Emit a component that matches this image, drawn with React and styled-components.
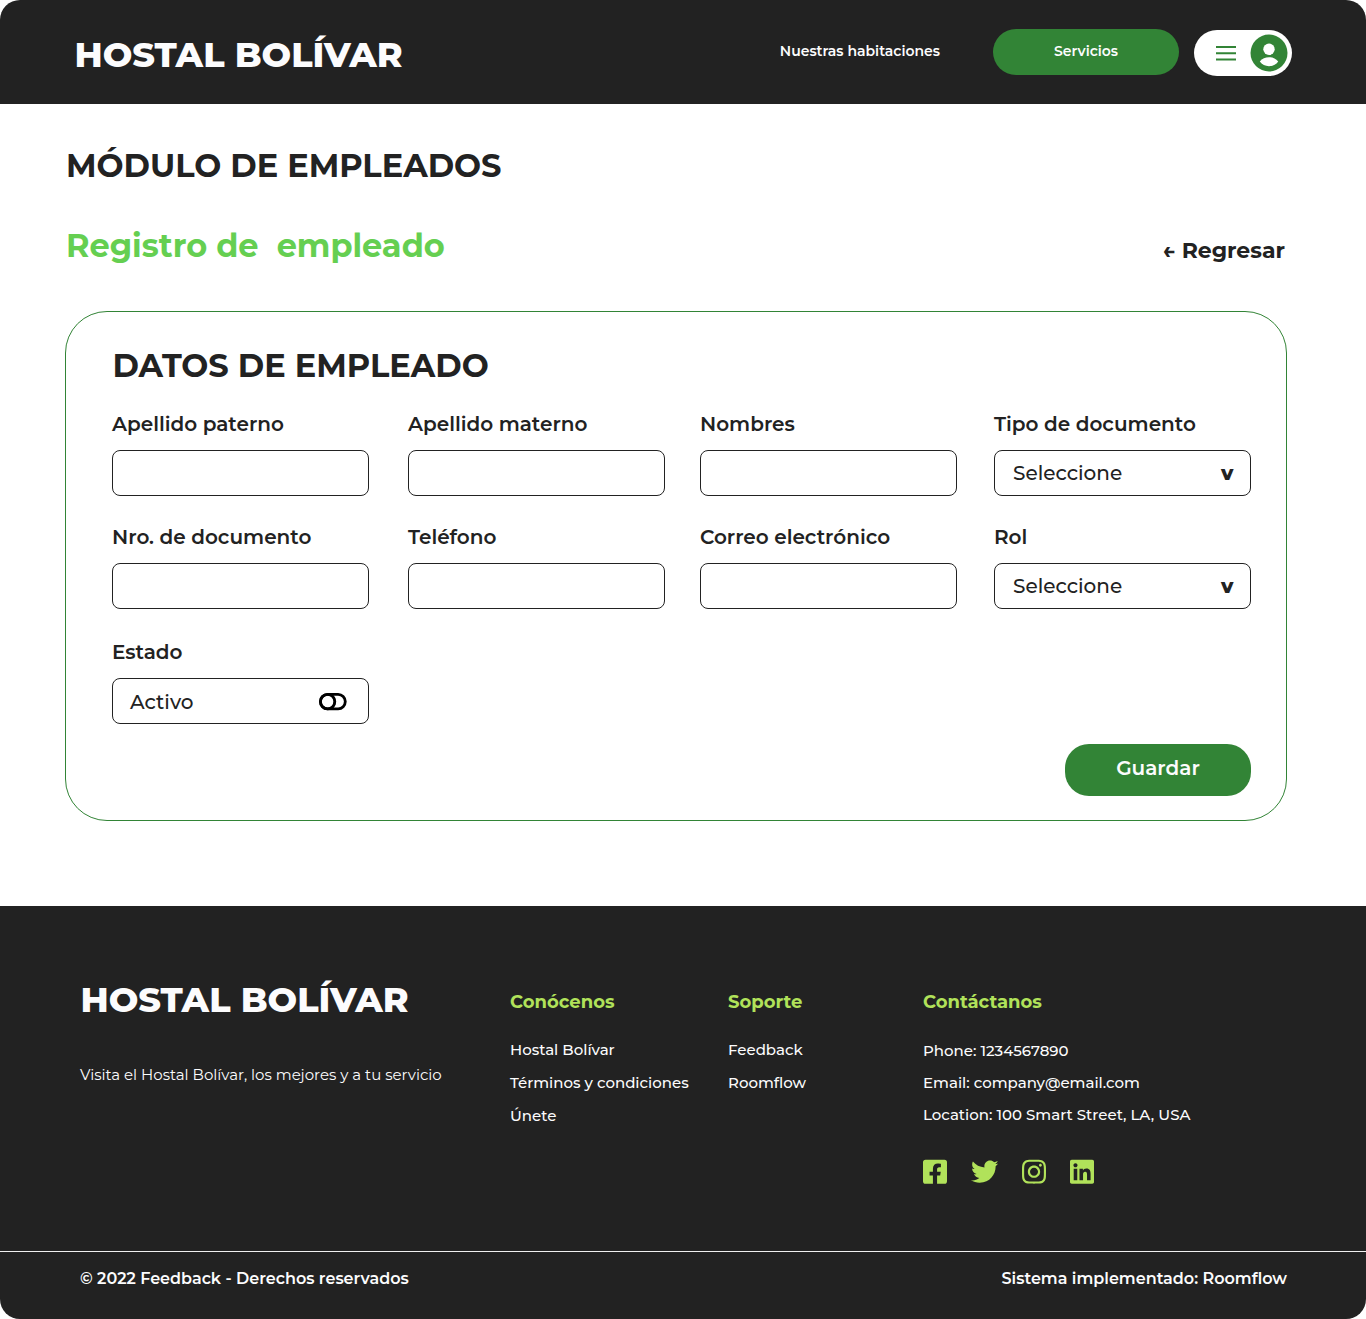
import React from "react";
import styled, { createGlobalStyle } from "styled-components";
import { FaFacebookSquare, FaTwitter, FaInstagram, FaLinkedin } from "react-icons/fa";

const green = "#328436";
const dark = "#222222";
const lime = "#b1e25a";
const snow = "#fcfcfd";

const GlobalStyle = createGlobalStyle`
  * { box-sizing: border-box; }
  body { margin: 0; background: #fff; color: ${dark}; }
  body, button, input { font-family: Montserrat, Inter, sans-serif; }
  a { color: inherit; text-decoration: none; }
`;

const Page = styled.div`
  width: 1366px;
  height: 1319px;
  display: flex;
  flex-direction: column;
`;

/* Header */
const Header = styled.header`
  height: 104px;
  flex: none;
  display: flex;
  align-items: flex-start;
  justify-content: space-between;
  padding: 29px 74px 0;
  background: ${dark};
  border-radius: 20px 20px 0 0;
`;

const Logo = styled.div`
  font-size: 35px;
  font-weight: 800;
  line-height: 40px;
  color: ${snow};
  white-space: nowrap;
  margin: ${(p) => p.$top || 0}px 0 0 0.5px;
`;

const Nav = styled.nav`
  display: flex;
  align-items: flex-start;
`;

const NavLink = styled.a`
  margin-right: 53px;
  font-size: 14px;
  font-weight: 600;
  line-height: 44px;
  color: ${snow};
`;

const NavButton = styled.button`
  width: 186px;
  height: 46px;
  padding: 0 0 2px;
  border: 0;
  border-radius: 23px;
  background: ${green};
  color: ${snow};
  font-size: 14px;
  font-weight: 600;
`;

const UserMenu = styled.button`
  width: 98px;
  height: 46px;
  margin: 1px 0 0 15px;
  padding: 0 4px 0 22px;
  display: flex;
  align-items: center;
  justify-content: space-between;
  border: 0;
  border-radius: 23px;
  background: #fff;
`;

/* Main */
const Main = styled.main`
  height: 802px;
  flex: none;
  padding: 42px 79px 0 65px;
`;

const Title = styled.h1`
  margin: 0 0 0 ${(p) => p.$left}px;
  font-size: 32px;
  font-weight: 700;
  line-height: 40px;
`;

const SubHeader = styled.div`
  display: flex;
  align-items: center;
  justify-content: space-between;
  height: 40px;
  margin-top: 40px;
`;

const Subtitle = styled.h2`
  margin: 0 0 0 1px;
  font-size: 32px;
  font-weight: 700;
  line-height: 40px;
  color: #65cf51;
  white-space: pre;
`;

const BackLink = styled.a`
  padding: 10px 2px 0 0;
  font-size: 22px;
  font-weight: 700;
  line-height: 26px;
`;

const Card = styled.section`
  height: 510px;
  margin-top: 45px;
  padding: 34px 35px 0 46px;
  border: 1px solid ${green};
  border-radius: 42px;
`;

const Form = styled.form`
  display: grid;
  grid-template-columns: 296px 292px 294px 257px;
  grid-template-rows: 113px 115px 84px;
  margin-top: 26px;
`;

const Field = styled.label`
  display: flex;
  flex-direction: column;
  gap: 14px;
  width: 257px;
`;

const Label = styled.span`
  font-size: 20px;
  font-weight: 600;
  line-height: 24px;
`;

const box = `
  width: 257px;
  height: 46px;
  border: 1px solid ${dark};
  border-radius: 8px;
  background: #fff;
`;

const Input = styled.input`
  ${box}
  padding: 0 17px;
  font-size: 20px;
  font-weight: 500;
`;

const Choice = styled.div`
  ${box}
  display: flex;
  align-items: center;
  justify-content: space-between;
  padding: ${(p) => p.$pad};
`;

const ChoiceText = styled.span`
  font-size: 20px;
  font-weight: 500;
  line-height: 24px;
`;

const Caret = styled.span`
  font-size: 20px;
  font-weight: 800;
  line-height: 24px;
`;

const Actions = styled.div`
  display: flex;
  justify-content: flex-end;
  margin-top: 20px;
`;

const SaveButton = styled.button`
  width: 186px;
  height: 52px;
  padding: 0 0 4px;
  border: 0;
  border-radius: 24px;
  background: ${green};
  color: ${snow};
  font-size: 20px;
  font-weight: 600;
`;

/* Footer */
const Footer = styled.footer`
  flex: 1;
  background: ${dark};
  color: ${snow};
  border-radius: 0 0 20px 20px;
`;

const FooterGrid = styled.div`
  height: 346px;
  display: grid;
  grid-template-columns: 430px 218px 195px 1fr;
  padding: 74px 79px 0 80px;
  border-bottom: 1px solid #f0f0f0;
`;

const FooterColumn = styled.div`
  padding-top: ${(p) => p.$top || 0}px;
`;

const Tagline = styled.p`
  margin: 45px 0 0;
  font-size: 15px;
  font-weight: 400;
  line-height: 20px;
`;

const FooterHeading = styled.h3`
  margin: 0;
  font-size: 18px;
  font-weight: 700;
  line-height: 24px;
  color: ${lime};
`;

const LinkList = styled.ul`
  list-style: none;
  margin: ${(p) => p.$gap}px 0 0;
  padding: 0;
`;

const LinkItem = styled.li`
  font-size: 15px;
  font-weight: 500;
  line-height: ${(p) => p.$line}px;
`;

const Social = styled.div`
  display: flex;
  gap: 24px;
  margin-top: 27.3px;
  color: ${lime};
`;

const SocialLink = styled.a`
  display: flex;

  svg {
    width: ${(p) => p.$width}px;
    height: 27.43px;
  }
`;

const Legal = styled.div`
  display: flex;
  justify-content: space-between;
  padding: 17px 79px 0 80px;
  font-size: 16px;
  font-weight: 600;
  line-height: 20px;
`;

const fields = [
  { label: "Apellido paterno" },
  { label: "Apellido materno" },
  { label: "Nombres" },
  { label: "Tipo de documento", type: "select" },
  { label: "Nro. de documento" },
  { label: "Teléfono" },
  { label: "Correo electrónico" },
  { label: "Rol", type: "select" },
  { label: "Estado", type: "toggle" },
];

const linkColumns = [
  { title: "Conócenos", links: ["Hostal Bolívar", "Términos y condiciones", "Únete"] },
  { title: "Soporte", links: ["Feedback", "Roomflow"] },
];

const contact = [
  "Phone: 1234567890",
  "Email: company@email.com",
  "Location: 100 Smart Street, LA, USA",
];

const networks = [
  { name: "Facebook", Icon: FaFacebookSquare, width: 24 },
  { name: "Twitter", Icon: FaTwitter, width: 27.43 },
  { name: "Instagram", Icon: FaInstagram, width: 24 },
  { name: "LinkedIn", Icon: FaLinkedin, width: 24 },
];

const MenuIcon = () => (
  <svg width="20" height="15" viewBox="0 0 20 15" stroke={green} strokeWidth="2">
    <path d="M0 1h20M0 7.2h20M0 13.4h20" />
  </svg>
);

const AvatarIcon = () => (
  <svg width="38" height="38" viewBox="-19 -19 38 38">
    <circle r="18.5" fill={green} />
    <circle cy="-3.7" r="5.7" fill="#fff" />
    <path d="M-9.2 8.6C-6.8 5.4-3.6 4.2 0 4.2S6.8 5.4 9.2 8.6C7 11.8 3.8 13.2 0 13.2S-7 11.8-9.2 8.6Z" fill="#fff" />
  </svg>
);

const ToggleIcon = () => (
  <svg width="28" height="18" viewBox="0 0 28 18" fill="none" stroke="#000" strokeWidth="2.8">
    <rect x="1.4" y="1.4" width="24.9" height="14.4" rx="7.2" />
    <circle cx="8.6" cy="8.6" r="7.2" />
    <path d="M12 1.8Q15.8 4 15.8 8.6T12 15.4" strokeWidth="2" />
  </svg>
);

function Control({ type }) {
  if (type === "select") {
    return (
      <Choice $pad="0 16.5px 0 18px">
        <ChoiceText>Seleccione</ChoiceText>
        <Caret>v</Caret>
      </Choice>
    );
  }
  if (type === "toggle") {
    return (
      <Choice $pad="1px 21.5px 0 17px">
        <ChoiceText>Activo</ChoiceText>
        <ToggleIcon />
      </Choice>
    );
  }
  return <Input type="text" />;
}

export default function App() {
  return (
    <Page>
      <GlobalStyle />
      <Header>
        <Logo $top={6}>HOSTAL BOLÍVAR</Logo>
        <Nav>
          <NavLink href="#">Nuestras habitaciones</NavLink>
          <NavButton type="button">Servicios</NavButton>
          <UserMenu type="button" aria-label="Menú">
            <MenuIcon />
            <AvatarIcon />
          </UserMenu>
        </Nav>
      </Header>

      <Main>
        <Title $left={1}>MÓDULO DE EMPLEADOS</Title>
        <SubHeader>
          <Subtitle>{"Registro de  empleado"}</Subtitle>
          <BackLink href="#">← Regresar</BackLink>
        </SubHeader>
        <Card>
          <Title as="h2" $left={0.4}>DATOS DE EMPLEADO</Title>
          <Form>
            {fields.map(({ label, type }) => (
              <Field key={label}>
                <Label>{label}</Label>
                <Control type={type} />
              </Field>
            ))}
          </Form>
          <Actions>
            <SaveButton type="button">Guardar</SaveButton>
          </Actions>
        </Card>
      </Main>

      <Footer>
        <FooterGrid>
          <FooterColumn>
            <Logo>HOSTAL BOLÍVAR</Logo>
            <Tagline>Visita el Hostal Bolívar, los mejores y a tu servicio</Tagline>
          </FooterColumn>
          {linkColumns.map(({ title, links }) => (
            <FooterColumn key={title} $top={10}>
              <FooterHeading>{title}</FooterHeading>
              <LinkList $gap={19}>
                {links.map((text) => (
                  <LinkItem key={text} $line={33}>
                    <a href="#">{text}</a>
                  </LinkItem>
                ))}
              </LinkList>
            </FooterColumn>
          ))}
          <FooterColumn $top={10}>
            <FooterHeading>Contáctanos</FooterHeading>
            <LinkList $gap={21}>
              {contact.map((text) => (
                <LinkItem key={text} $line={32}>{text}</LinkItem>
              ))}
            </LinkList>
            <Social>
              {networks.map(({ name, Icon, width }) => (
                <SocialLink key={name} href="#" aria-label={name} $width={width}>
                  <Icon />
                </SocialLink>
              ))}
            </Social>
          </FooterColumn>
        </FooterGrid>
        <Legal>
          <span>© 2022 Feedback - Derechos reservados</span>
          <span>Sistema implementado: Roomflow</span>
        </Legal>
      </Footer>
    </Page>
  );
}
